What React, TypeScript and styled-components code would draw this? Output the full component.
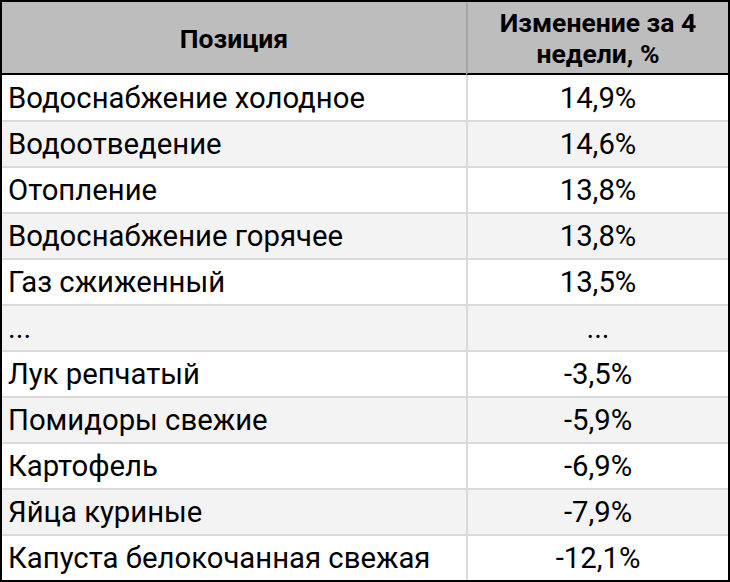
import React from 'react';
import styled, { createGlobalStyle } from 'styled-components';

const GlobalStyle = createGlobalStyle`
  html, body {
    margin: 0;
    padding: 0;
    background: #ffffff;
  }
  body {
    font-family: Roboto, "Noto Sans", "Liberation Sans", sans-serif;
    color: #000000;
  }
`;

const Table = styled.div`
  box-sizing: border-box;
  width: 730px;
  border: 2px solid #000000;
  display: grid;
  grid-template-columns: 464px 262px;
`;

const HeadCell = styled.div<{ $divider?: boolean }>`
  box-sizing: border-box;
  height: 73px;
  background: #bdbdbd;
  border-bottom: 2px solid #000000;
  border-left: ${(p) => (p.$divider ? '2px solid #a5a5a5' : 'none')};
  display: flex;
  align-items: center;
  justify-content: center;
  text-align: center;
  font-weight: 700;
  font-size: 26.5px;
  line-height: 31px;
  padding-top: 1px;
`;

const Cell = styled.div<{ $shaded: boolean; $first: boolean; $value?: boolean }>`
  box-sizing: border-box;
  height: ${(p) => (p.$first ? '45px' : '46px')};
  border-top: ${(p) => (p.$first ? 'none' : '2px solid #dadada')};
  border-left: ${(p) => (p.$value ? '2px solid #dadada' : 'none')};
  background: ${(p) => (p.$shaded ? '#f3f3f3' : '#ffffff')};
  display: flex;
  align-items: center;
  justify-content: ${(p) => (p.$value ? 'center' : 'flex-start')};
  padding: ${(p) => (p.$value ? '0' : '0 0 0 6px')};
  font-size: 29.3px;
  white-space: nowrap;
`;

const rows: [string, string][] = [
  ['Водоснабжение холодное', '14,9%'],
  ['Водоотведение', '14,6%'],
  ['Отопление', '13,8%'],
  ['Водоснабжение горячее', '13,8%'],
  ['Газ сжиженный', '13,5%'],
  ['...', '...'],
  ['Лук репчатый', '-3,5%'],
  ['Помидоры свежие', '-5,9%'],
  ['Картофель', '-6,9%'],
  ['Яйца куриные', '-7,9%'],
  ['Капуста белокочанная свежая', '-12,1%'],
];

function App() {
  return (
    <>
      <GlobalStyle />
      <Table>
        <HeadCell>Позиция</HeadCell>
        <HeadCell $divider>
          Изменение за 4
          <br />
          недели, %
        </HeadCell>
        {rows.map(([name, value], i) => (
          <React.Fragment key={name + i}>
            <Cell $shaded={i % 2 === 1} $first={i === 0}>
              {name}
            </Cell>
            <Cell $shaded={i % 2 === 1} $first={i === 0} $value>
              {value}
            </Cell>
          </React.Fragment>
        ))}
      </Table>
    </>
  );
}

export default App;
